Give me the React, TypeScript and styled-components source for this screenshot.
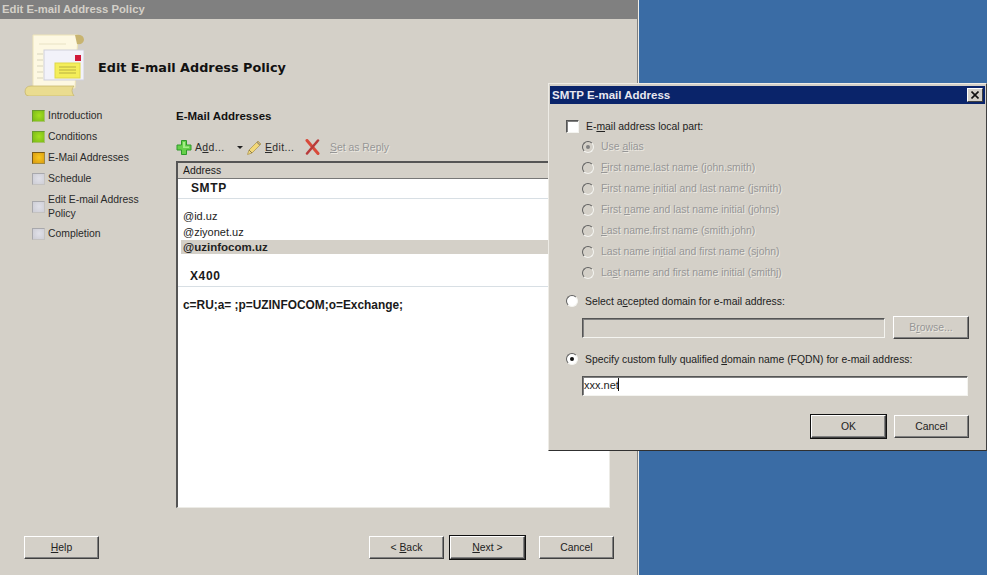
import styled, { createGlobalStyle } from "styled-components";

const GlobalStyle = createGlobalStyle`
  html, body {
    margin: 0;
    padding: 0;
    width: 987px;
    height: 575px;
    overflow: hidden;
    background: #3a6ca5;
    font-family: "Liberation Sans", Arial, sans-serif;
    font-size: 10.4px;
    color: #1a1a1a;
  }
  * { box-sizing: border-box; }
`;

const Desktop = styled.div`
  position: relative;
  width: 987px;
  height: 575px;
  background: #3a6ca5;
`;

const Wizard = styled.div`
  width: 639px;
  height: 575px;
  display: flex;
  flex-direction: column;
  background: #d4d0c8;
  border-right: 1px solid #f0eee8;
  box-shadow: inset -1px 0 0 #808080;
`;

const WizardTitle = styled.div`
  height: 19px;
  margin-right: 1px;
  padding: 1px 0 0 2px;
  background: #808080;
  color: #d4d0c8;
  font-weight: bold;
  font-size: 11.3px;
  line-height: 17px;
`;

const WizardHeader = styled.div`
  height: 79px;
  padding: 15px 0 0 24px;
  display: flex;
  align-items: flex-start;
  gap: 14px;
`;

const WizardHeading = styled.div`
  margin-top: 25px;
  font-family: "DejaVu Sans", Verdana, sans-serif;
  font-weight: bold;
  font-size: 12.8px;
  line-height: 18px;
  color: #111;
`;

const WizardBody = styled.div`
  flex: 1;
  display: flex;
  min-height: 0;
`;

const StepList = styled.div`
  width: 176px;
  padding: 11px 0 0 32px;
  display: flex;
  flex-direction: column;
  gap: 7px;
`;

const Step = styled.div`
  display: flex;
  align-items: center;
  gap: 3px;
  line-height: 14px;
  color: #2a2a2a;
`;

const StepLines = styled.span`
  line-height: 13.5px;
`;

const stepColors = {
  done: { fill: "#a4e020", mid: "#78b818", edge: "#6a9a30", soft: "#a8c070" },
  current: { fill: "#f8c820", mid: "#d89810", edge: "#7a5a18", soft: "#a08840" },
  todo: { fill: "#e0e0e8", mid: "#ccccd4", edge: "#a8a8ac", soft: "#c4c2c0" },
};

const StepMark = styled.span<{ $state: keyof typeof stepColors }>`
  flex: none;
  width: 13px;
  height: 12px;
  background: radial-gradient(
    circle at 55% 45%,
    ${(p) => stepColors[p.$state].fill},
    ${(p) => stepColors[p.$state].mid}
  );
  border: 1px solid;
  border-color: ${(p) => stepColors[p.$state].edge}
    ${(p) => stepColors[p.$state].soft} ${(p) => stepColors[p.$state].soft}
    ${(p) => stepColors[p.$state].edge};
`;

const Main = styled.div`
  width: 434px;
  display: flex;
  flex-direction: column;
`;

const SectionTitle = styled.div`
  margin-top: 10px;
  height: 16px;
  line-height: 16px;
  font-weight: bold;
  font-size: 11.5px;
  color: #111;
`;

const Toolbar = styled.div`
  margin: 12px 0 3px;
  height: 22px;
  display: flex;
  align-items: center;
  white-space: nowrap;
`;

const ToolLabel = styled.span<{ $off?: boolean; $w: number; $gap?: number }>`
  width: ${(p) => p.$w}px;
  margin-left: ${(p) => p.$gap ?? 3}px;
  letter-spacing: ${(p) => (p.$off ? 0 : 0.4)}px;
  color: ${(p) => (p.$off ? "#969696" : "#2a2a2a")};
  text-shadow: ${(p) => (p.$off ? "1px 1px 0 #ece9e2" : "none")};
`;

const Caret = styled.span`
  margin: 0 3px 0 11px;
  width: 0;
  height: 0;
  border-left: 3px solid transparent;
  border-right: 3px solid transparent;
  border-top: 3px solid #222;
`;

const AddressList = styled.div`
  height: 347px;
  display: flex;
  flex-direction: column;
  background: #fff;
  border: 1px solid #ecebe6;
  border-top: 2px solid #555;
  border-left: 2px solid #555;
`;

const ColumnHeader = styled.div`
  height: 16px;
  padding-left: 5px;
  line-height: 16px;
  background: #d4d0c8;
  border-bottom: 1px solid #777;
`;

const GroupTitle = styled.div<{ $top: number; $left: number }>`
  margin-top: ${(p) => p.$top}px;
  height: 20px;
  padding-left: ${(p) => p.$left}px;
  line-height: 19px;
  font-weight: bold;
  font-size: 12px;
  letter-spacing: 0.6px;
  border-bottom: 1px solid #d8dfe4;
`;

const AddressRow = styled.div<{ $selected?: boolean; $top?: number }>`
  height: ${(p) => (p.$selected ? 14 : 16)}px;
  margin-top: ${(p) => p.$top ?? 0}px;
  margin-left: 3px;
  padding-left: 2px;
  line-height: ${(p) => (p.$selected ? 14 : 16)}px;
  font-size: ${(p) => (p.$selected ? 11.5 : 11)}px;
  color: #222;
  font-weight: ${(p) => (p.$selected ? "bold" : "normal")};
  background: ${(p) => (p.$selected ? "#d4d0c8" : "transparent")};
`;

const X400Row = styled.div`
  margin: 10px 0 0 5px;
  height: 16px;
  line-height: 16px;
  font-weight: bold;
  font-size: 11.9px;
`;

const WizardFooter = styled.div`
  height: 67px;
  padding: 28px 24px 0;
  display: flex;
  align-items: flex-start;
`;

const Button = styled.div<{ $default?: boolean; $off?: boolean; $w?: number }>`
  width: ${(p) => p.$w ?? 75}px;
  height: 23px;
  display: flex;
  align-items: center;
  justify-content: center;
  background: #d4d0c8;
  color: ${(p) => (p.$off ? "#969696" : "#222")};
  text-shadow: ${(p) => (p.$off ? "1px 1px 0 #ece9e2" : "none")};
  border: 1px solid;
  border-color: #fff #404040 #404040 #fff;
  box-shadow: ${(p) =>
    p.$default
      ? "0 0 0 1px #111, inset -1px -1px 0 #808080"
      : "inset -1px -1px 0 #808080"};
`;

const FooterSpacer = styled.div`
  flex: 1;
`;

const NavButtons = styled.div`
  display: flex;
  gap: 6px;
  margin-right: 14px;
`;

const Dialog = styled.div`
  position: absolute;
  left: 548px;
  top: 83px;
  width: 439px;
  height: 368px;
  background: #d4d0c8;
  border: 1px solid;
  border-color: #eeece6 #404040 #303030 #eeece6;
  padding: 2px 1px 0 1px;
  display: flex;
  flex-direction: column;
`;

const DialogTitle = styled.div`
  height: 18px;
  flex: none;
  padding: 0 2px 0 2px;
  display: flex;
  align-items: center;
  justify-content: space-between;
  background: #0a246a;
  color: #e8e8f0;
  font-weight: bold;
  font-size: 11.5px;
`;

const CloseButton = styled.div`
  width: 16px;
  height: 14px;
  display: flex;
  align-items: center;
  justify-content: center;
  background: #d4d0c8;
  border: 1px solid;
  border-color: #fff #404040 #404040 #fff;
`;

const DialogBody = styled.div`
  flex: 1;
  padding: 14px 16px 0 16px;
  display: flex;
  flex-direction: column;
`;

const CheckRow = styled.div`
  height: 16px;
  display: flex;
  align-items: center;
  gap: 7px;
  color: #222;
`;

const CheckBox = styled.span`
  flex: none;
  width: 13px;
  height: 13px;
  background: #fff;
  border: 1px solid;
  border-color: #555 #f4f4f0 #f4f4f0 #555;
  box-shadow: inset 1px 1px 0 #808080;
`;

const OptionList = styled.div`
  margin-top: 2px;
  padding-left: 16px;
  display: flex;
  flex-direction: column;
`;

const RadioRow = styled.div<{ $off?: boolean; $h?: number; $top?: number }>`
  height: ${(p) => p.$h ?? 21}px;
  margin-top: ${(p) => p.$top ?? 0}px;
  display: flex;
  align-items: center;
  gap: 7px;
  color: ${(p) => (p.$off ? "#969696" : "#222")};
  text-shadow: ${(p) => (p.$off ? "1px 1px 0 #ece9e2" : "none")};
`;

const Radio = styled.span<{ $off?: boolean; $on?: boolean }>`
  flex: none;
  width: 12px;
  height: 12px;
  border-radius: 50%;
  display: flex;
  align-items: center;
  justify-content: center;
  background: ${(p) => (p.$off ? "#d4d0c8" : "#fff")};
  border: 1px solid;
  border-color: #606060 #f4f4f0 #f4f4f0 #606060;

  &::after {
    content: "";
    display: ${(p) => (p.$on ? "block" : "none")};
    width: 4px;
    height: 4px;
    border-radius: 50%;
    background: ${(p) => (p.$off ? "#808080" : "#111")};
  }
`;

const DomainRow = styled.div`
  margin-top: 7px;
  padding-left: 16px;
  display: flex;
  align-items: center;
  gap: 8px;
`;

const Field = styled.div<{ $off?: boolean }>`
  flex: 1;
  height: 20px;
  padding-left: 1px;
  line-height: 17px;
  font-size: 11px;
  background: ${(p) => (p.$off ? "#d4d0c8" : "#fff")};
  color: #222;
  border: 1px solid;
  border-color: #555 #f4f4f0 #f4f4f0 #555;
  box-shadow: inset 1px 1px 0 #808080;
`;

const FqdnField = styled(Field)`
  flex: none;
  width: 386px;
  margin: 9px 0 0 16px;
`;

const Cursor = styled.span`
  display: inline-block;
  width: 1px;
  height: 13px;
  margin-left: -1px;
  vertical-align: -2px;
  background: #111;
`;

const DialogButtons = styled.div`
  margin-top: 19px;
  display: flex;
  justify-content: flex-end;
  gap: 8px;
`;

const ScrollIcon = () => (
  <svg width="60" height="62" viewBox="0 0 60 62">
    <path d="M9 1 H54 L51 54 H9 Z" fill="#fdf8e2" stroke="#eee4b8" />
    <path d="M51 1 Q60 0 60 6 Q59 11 53 10 Z" fill="#c8b470" />
    <path d="M1 58 Q1 52 7 52 H50 Q46 56 50 62 H5 Q1 62 1 58 Z" fill="#eadc90" stroke="#c8b870" strokeWidth="0.8" />
    <path d="M13 20 H19 M13 26 H19 M13 32 H19 M13 38 H19 M13 44 H19" stroke="#d8d4bc" />
    <path d="M15 10 H42" stroke="#e8e2c4" />
    <rect x="20" y="16" width="40" height="30" fill="#f2f2fa" stroke="#cfcfda" />
    <rect x="31" y="29" width="25" height="15" fill="#f4ee5a" stroke="#e0d848" />
    <path d="M35 33 H52 M35 36 H52 M35 39 H52" stroke="#b8b040" />
    <rect x="51" y="21" width="6" height="6" fill="#d01838" />
  </svg>
);

const AddIcon = () => (
  <svg width="16" height="17" viewBox="0 0 16 17">
    <path d="M5.5 1.5 H10.5 V6 H15 V11 H10.5 V15.5 H5.5 V11 H1 V6 H5.5 Z" fill="#66d04a" stroke="#2f9a2a" strokeWidth="1" strokeLinejoin="round" />
    <path d="M7 3 H9 V7.5 H13 V9 H7 Z" fill="#a4ec88" />
  </svg>
);

const PencilIcon = () => (
  <svg width="16" height="17" viewBox="0 0 16 17">
    <path d="M1.5 15.5 L3 11 L12 2 L15 5 L6 14 Z" fill="#f2d878" stroke="#b8a468" strokeWidth="1" strokeLinejoin="round" />
    <path d="M3 11 L6 14" stroke="#8a7a50" strokeWidth="1" />
    <path d="M11 3 L14 6" stroke="#a09070" strokeWidth="1.5" />
  </svg>
);

const DeleteIcon = () => (
  <svg width="15" height="16" viewBox="0 0 15 16">
    <path d="M2 1.5 L13 14.5" stroke="#d84a3a" strokeWidth="3" strokeLinecap="round" />
    <path d="M13 1.5 L2 14.5" stroke="#b83a3a" strokeWidth="2.5" strokeLinecap="round" />
  </svg>
);

const CloseIcon = () => (
  <svg width="8" height="8" viewBox="0 0 8 8">
    <path d="M0.5 0.5 L7.5 7.5 M7.5 0.5 L0.5 7.5" stroke="#111" strokeWidth="1.6" />
  </svg>
);

export default function App() {
  return (
    <Desktop>
      <GlobalStyle />
      <Wizard>
        <WizardTitle>Edit E-mail Address Policy</WizardTitle>
        <WizardHeader>
          <ScrollIcon />
          <WizardHeading>Edit E-mail Address Policy</WizardHeading>
        </WizardHeader>
        <WizardBody>
          <StepList>
            <Step><StepMark $state="done" />Introduction</Step>
            <Step><StepMark $state="done" />Conditions</Step>
            <Step><StepMark $state="current" />E-Mail Addresses</Step>
            <Step><StepMark $state="todo" />Schedule</Step>
            <Step><StepMark $state="todo" /><StepLines>Edit E-mail Address<br />Policy</StepLines></Step>
            <Step><StepMark $state="todo" />Completion</Step>
          </StepList>
          <Main>
            <SectionTitle>E-Mail Addresses</SectionTitle>
            <Toolbar>
              <AddIcon />
              <ToolLabel $w={31}>A<u>d</u>d...</ToolLabel>
              <Caret />
              <PencilIcon />
              <ToolLabel $w={40}><u>E</u>dit...</ToolLabel>
              <DeleteIcon />
              <ToolLabel $off $w={62} $gap={10}><u>S</u>et as Reply</ToolLabel>
            </Toolbar>
            <AddressList>
              <ColumnHeader>Address</ColumnHeader>
              <GroupTitle $top={0} $left={13}>SMTP</GroupTitle>
              <AddressRow $top={9}>@id.uz</AddressRow>
              <AddressRow>@ziyonet.uz</AddressRow>
              <AddressRow $selected>@uzinfocom.uz</AddressRow>
              <GroupTitle $top={13} $left={12}>X400</GroupTitle>
              <X400Row>c=RU;a= ;p=UZINFOCOM;o=Exchange;</X400Row>
            </AddressList>
          </Main>
        </WizardBody>
        <WizardFooter>
          <Button><span><u>H</u>elp</span></Button>
          <FooterSpacer />
          <NavButtons>
            <Button><span>&lt; <u>B</u>ack</span></Button>
            <Button $default><span><u>N</u>ext &gt;</span></Button>
          </NavButtons>
          <Button>Cancel</Button>
        </WizardFooter>
      </Wizard>

      <Dialog>
        <DialogTitle>
          SMTP E-mail Address
          <CloseButton><CloseIcon /></CloseButton>
        </DialogTitle>
        <DialogBody>
          <CheckRow>
            <CheckBox />
            <span>E-<u>m</u>ail address local part:</span>
          </CheckRow>
          <OptionList>
            <RadioRow $off><Radio $off $on /><span>Use <u>a</u>lias</span></RadioRow>
            <RadioRow $off><Radio $off /><span><u>F</u>irst name.last name (john.smith)</span></RadioRow>
            <RadioRow $off><Radio $off /><span>First name <u>i</u>nitial and last name (jsmith)</span></RadioRow>
            <RadioRow $off><Radio $off /><span>First <u>n</u>ame and last name initial (johns)</span></RadioRow>
            <RadioRow $off><Radio $off /><span><u>L</u>ast name.first name (smith.john)</span></RadioRow>
            <RadioRow $off><Radio $off /><span>Last name in<u>i</u>tial and first name (sjohn)</span></RadioRow>
            <RadioRow $off><Radio $off /><span>La<u>s</u>t name and first name initial (smithj)</span></RadioRow>
          </OptionList>
          <RadioRow $h={16} $top={10}>
            <Radio />
            <span>Select a<u>c</u>cepted domain for e-mail address:</span>
          </RadioRow>
          <DomainRow>
            <Field $off />
            <Button $off $w={76}><span>B<u>r</u>owse...</span></Button>
          </DomainRow>
          <RadioRow $h={16} $top={12}>
            <Radio $on />
            <span>Specify custom fully qualified <u>d</u>omain name (FQDN) for e-mail address:</span>
          </RadioRow>
          <FqdnField>xxx.net<Cursor /></FqdnField>
          <DialogButtons>
            <Button $default>OK</Button>
            <Button>Cancel</Button>
          </DialogButtons>
        </DialogBody>
      </Dialog>
    </Desktop>
  );
}
